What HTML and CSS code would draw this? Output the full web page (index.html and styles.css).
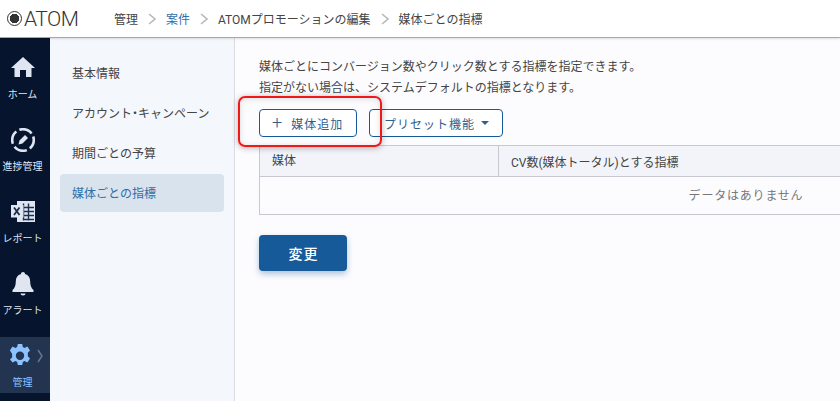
FILE: index.html
```html
<!DOCTYPE html>
<html lang="ja">
<head>
    <meta charset="utf-8" />
    <title>媒体ごとの指標</title>
    <link rel="stylesheet" href="styles.css">
</head>
<body>
<header class="topbar">
    <div class="logo"><span class="logo-mark"></span><span class="logo-text">ATOM</span></div>
    <nav class="crumbs">
        <span>管理</span>
        <svg class="crumb-sep" viewBox="0 0 8 12"><path d="M1 1l6 5-6 5" /></svg>
        <span class="crumb-link">案件</span>
        <svg class="crumb-sep" viewBox="0 0 8 12"><path d="M1 1l6 5-6 5" /></svg>
        <span>ATOMプロモーションの編集</span>
        <svg class="crumb-sep" viewBox="0 0 8 12"><path d="M1 1l6 5-6 5" /></svg>
        <span>媒体ごとの指標</span>
    </nav>
</header>

<div class="layout">
    <!-- Main icon rail -->
    <aside class="rail">
        <div class="rail-item">
            <svg class="rail-icon" viewBox="0 0 24 24"><path d="M12 1L0 12h3.500v9H9v-7h6v7h5.500v-9H24z" fill="#dfe6f2" /></svg>
            <span>ホーム</span>
        </div>
        <div class="rail-item">
            <svg class="rail-icon" viewBox="0 0 24 24">
                <circle cx="12" cy="12" r="10.800" fill="none" stroke="#dfe6f2" stroke-width="2.600" stroke-dasharray="13.500 3.460" stroke-dashoffset="4" />
                <path d="M7.500 16.500l1-4 5.500-5.500 3 3-5.500 5.500z" fill="#dfe6f2" />
            </svg>
            <span>進捗管理</span>
        </div>
        <div class="rail-item">
            <svg class="rail-icon" viewBox="0 0 24 24">
                <path d="M6 1h18v21H6z" fill="#dfe6f2" />
                <path d="M12.500 3.500v17M17.500 3.500v17M13 7.500h10M13 11.500h10M13 15.500h10M13 19.500h10" stroke="#1d3050" stroke-width="1.400" />
                <path d="M0 5h12.500v12.500H0z" fill="#dfe6f2" />
                <path d="M3 7.500l5.500 7.500M8.500 7.500L3 15" stroke="#1d2a48" stroke-width="1.800" />
            </svg>
            <span>レポート</span>
        </div>
        <div class="rail-item">
            <svg class="rail-icon" viewBox="0 0 24 24">
                <path d="M12 0c1.300 0 2 .9 2 2 3.500 1 5.200 3.700 5.200 7.500 0 4 1 6.500 3.300 8.500v2h-21v-2c2.300-2 3.300-4.500 3.300-8.500C4.800 5.700 6.500 3 10 2c0-1.100.7-2 2-2z" fill="#dfe6f2" />
                <path d="M9.500 21.500h5c0 1.200-1 2-2.500 2s-2.500-.8-2.500-2z" fill="#dfe6f2" />
            </svg>
            <span>アラート</span>
        </div>
        <div class="rail-item rail-item-active">
            <div class="rail-active-icons">
                <svg class="rail-icon" viewBox="0 0 24 24"><path fill-rule="evenodd" d="M9.800 0h4.400l.6 3.100 1.700.8 2.900-1.300 2.600 3.900-2.200 2.200.1 3.600-.1 0 2.200 2.200-2.600 3.900-2.900-1.300-1.700.8-.6 3.100H9.800l-.6-3.100-1.700-.8-2.900 1.300L2 15.500l2.200-2.200-.1-3.600L1.900 6.500l2.600-3.900 2.900 1.300 1.700-.8zM12 7.500a4.200 4.200 0 100 8.400 4.200 4.200 0 000-8.400z" fill="#8cc2ff" /></svg>
                <svg class="rail-chevron" viewBox="0 0 6 14"><path d="M1 1l4 6-4 6" /></svg>
            </div>
            <span>管理</span>
        </div>
    </aside>

    <!-- Sub navigation -->
    <nav class="subnav">
        <a class="subnav-item">基本情報</a>
        <a class="subnav-item">アカウント<span class="dot">・</span>キャンペーン</a>
        <a class="subnav-item">期間ごとの予算</a>
        <a class="subnav-item subnav-item-active">媒体ごとの指標</a>
    </nav>

    <main class="content">
        <p class="intro">媒体ごとにコンバージョン数やクリック数とする指標を指定できます。<br>指定がない場合は、システムデフォルトの指標となります。</p>
        <div class="actions">
            <button class="btn-outline btn-add"><span class="plus">+</span>媒体追加</button>
            <button class="btn-outline btn-preset">プリセット機能<span class="caret"></span></button>
        </div>
        <div class="table">
            <div class="table-head">
                <div class="col-media">媒体</div>
                <div class="col-metric">CV数(媒体トータル)とする指標</div>
            </div>
            <div class="table-empty">データはありません</div>
        </div>
        <button class="btn-submit">変更</button>
    </main>
</div>

<!-- Red annotation box drawn over the screenshot -->
<div class="highlight"></div>
</body>
</html>
```

FILE: styles.css
```css
body {
    margin: 0;
    width: 840px;
    height: 401px;
    overflow: hidden;
    position: relative;
    background-color: #fcfcfe;
    color: #444;
    font-family: Roboto, "Noto Sans CJK JP", sans-serif;
    font-size: 12px;
}
/* Top bar */
.topbar {
    height: 37px;
    display: flex;
    align-items: center;
    background-color: #fff;
    border-bottom: 1px solid #a8a8a8;
    box-shadow: 0 1px 2px rgba(0,0,0,0.12);
    position: relative;
    z-index: 1;
}
.logo {
    width: 114px;
    display: flex;
    align-items: center;
    gap: 2px;
    padding-left: 7px;
    box-sizing: border-box;
}
.logo-mark {
    width: 15px;
    height: 15px;
    box-sizing: border-box;
    border-radius: 50%;
    border: 1.5px solid #333;
    background: radial-gradient(circle, #333 0 4.5px, #fff 5px);
}
.logo-text {
    font-size: 21px;
    font-weight: 300;
    letter-spacing: -0.5px;
    color: #333;
}
.crumbs {
    display: flex;
    align-items: center;
    gap: 10px;
    font-size: 12px;
    color: #444;
}
.crumb-link {
    color: #2f6ea8;
}
.crumb-sep {
    width: 8px;
    height: 12px;
    fill: none;
    stroke: #b8b8b8;
    stroke-width: 1.6;
}
/* Page columns */
.layout {
    display: flex;
    height: 363px;
}
.rail {
    width: 50px;
    flex-shrink: 0;
    background-color: #06142e;
    display: flex;
    flex-direction: column;
    padding-top: 18px;
    box-sizing: border-box;
}
.rail-item {
    height: 72px;
    flex-shrink: 0;
    padding-right: 5px;
    box-sizing: border-box;
    display: flex;
    flex-direction: column;
    align-items: center;
    gap: 8px;
    color: #dfe6f2;
    font-size: 10px;
    line-height: 14px;
}
/* Highlight starts a little above the icon, into the previous item's space */
.rail-item-active {
    height: 56px;
    margin-top: -7px;
    padding-top: 7px;
    background-color: #22344f;
    color: #8cc2ff;
}
.rail-icon {
    width: 24px;
    height: 24px;
    flex-shrink: 0;
}
.rail-active-icons {
    display: flex;
    align-items: center;
    gap: 5px;
    margin-left: 6px;
}
.rail-chevron {
    width: 6px;
    height: 14px;
    fill: none;
    stroke: #5f7896;
    stroke-width: 1.5;
}
.subnav {
    width: 185px;
    flex-shrink: 0;
    box-sizing: border-box;
    background-color: #f4f7fc;
    border-right: 1px solid #d8dbe2;
    padding: 16px 10px 0;
    display: flex;
    flex-direction: column;
}
.subnav-item {
    height: 38px;
    box-sizing: border-box;
    margin-bottom: 2px;
    padding: 0 0 2px 12px;
    display: flex;
    align-items: center;
    border-radius: 4px;
    color: #444;
}
.subnav-item-active {
    background-color: #d9e3ee;
    color: #2f6ea8;
}
.dot {
    font-feature-settings: "palt";
}
.content {
    flex: 1;
    min-width: 0;
    overflow: hidden;
    padding: 19px 0 0 24px;
}
.intro {
    margin: 0 0 10px;
    line-height: 21px;
}
.actions {
    display: flex;
    gap: 12px;
    margin-bottom: 8px;
}
.btn-outline {
    height: 28px;
    box-sizing: border-box;
    border: 1px solid #175a99;
    border-radius: 4px;
    background-color: #fff;
    color: #2f5f8f;
    font-family: inherit;
    font-size: 12px;
    letter-spacing: 1px;
    display: flex;
    align-items: center;
    padding: 0;
}
.btn-add {
    width: 98px;
    padding-left: 12px;
}
.btn-preset {
    width: 134px;
    padding-left: 14px;
}
.plus {
    font-size: 18px;
    font-weight: 300;
    line-height: 1;
    margin-right: 8px;
}
.caret {
    margin-left: 6px;
    border-left: 4px solid transparent;
    border-right: 4px solid transparent;
    border-top: 4px solid #2f5f8f;
}
/* Table runs past the right edge of the window */
.table {
    width: 974px;
    box-sizing: border-box;
    border: 1px solid #c8c8d0;
    margin-bottom: 20px;
}
.table-head {
    height: 30px;
    display: flex;
    align-items: center;
    background-color: #f3f4f9;
    border-bottom: 1px solid #c8c8d0;
}
.col-media {
    width: 239px;
    height: 100%;
    box-sizing: border-box;
    padding-left: 12px;
    line-height: 30px;
    border-right: 1px solid #c8c8d0;
}
.col-metric {
    padding-left: 12px;
}
.table-empty {
    height: 37px;
    line-height: 39px;
    text-align: center;
    letter-spacing: 0.8px;
    color: #777;
}
.btn-submit {
    width: 88px;
    height: 36px;
    padding: 0 0 0 1px;
    border: none;
    border-radius: 4px;
    background-color: #175a99;
    color: #fff;
    font-family: inherit;
    font-size: 14px;
    font-weight: 500;
    letter-spacing: 1px;
    box-shadow: 0 3px 6px rgba(23,90,153,0.35);
}
.highlight {
    position: absolute;
    left: 238px;
    top: 96px;
    width: 140px;
    height: 47px;
    border: 2px solid #f01818;
    border-radius: 7px;
    box-shadow: 0 1px 6px rgba(0,0,0,0.3), inset 0 1px 6px rgba(0,0,0,0.12);
}
```
